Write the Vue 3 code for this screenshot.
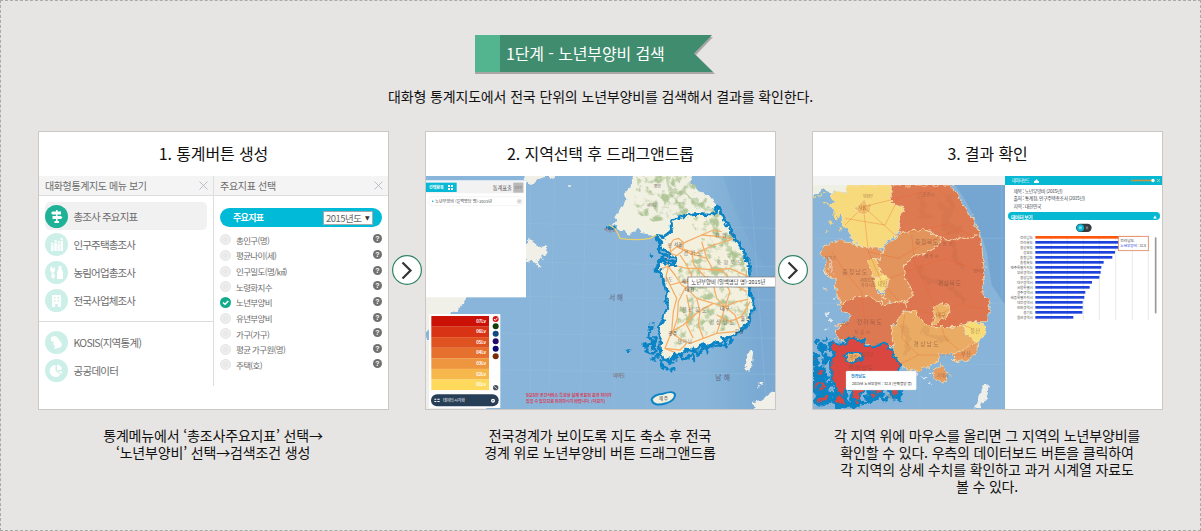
<script setup>
const menu = [
  { label: '총조사 주요지표', icon: 'sign', active: true },
  { label: '인구주택총조사', icon: 'people' },
  { label: '농림어업총조사', icon: 'farm' },
  { label: '전국사업체조사', icon: 'building' },
]
const extra = [
  { label: 'KOSIS(지역통계)', icon: 'korea' },
  { label: '공공데이터', icon: 'pie' },
]
const indicators = ['총인구(명)', '평균나이(세)', '인구밀도(명/㎢)', '노령화지수', '노년부양비', '유년부양비', '가구(가구)', '평균 가구원(명)', '주택(호)']

const levels = [
  { label: '07Lv', color: '#cb1106' }, { label: '06Lv', color: '#d93315' },
  { label: '05Lv', color: '#df5221' }, { label: '04Lv', color: '#e6712f' },
  { label: '03Lv', color: '#ee963f' }, { label: '02Lv', color: '#f6b84c' },
  { label: '01Lv', color: '#fed95c' },
]
const swatches = ['#123f08', '#12487d', '#220a68', '#0a0a70', '#7a2c07']

const southCoast = 'M710 330L730 335L745 325L755 315L750 300L762 285L790 273L830 268L870 270L885 262L892 240L905 270L925 305L945 340L965 370L980 400L990 430L993 455L990 480L987 515L1003 522L1000 550L985 585L975 610L955 622L935 632L915 640L900 655L880 650L860 665L840 660L825 680L800 675L785 690L765 690L750 710L735 705L722 690L718 665L722 635L712 610L725 590L735 560L750 545L735 530L745 500L735 490L728 460L715 440L705 430L720 408L740 415L760 425L765 400L735 375L715 360Z'
const roads = [
  'M770 365L740 390L745 425L765 450L785 480L800 490L830 520L880 535L915 545L945 570L960 612',
  'M770 365L800 350L845 330L900 335L938 343', 'M845 330L880 315L905 320', 'M938 343L880 360L830 385L790 372',
  'M760 345L775 340L790 352L788 378L770 392L752 385L750 360Z', 'M780 390L800 420L815 450L808 480L795 490',
  'M815 380L822 420L850 450L880 480L890 520L915 545', 'M845 350L860 400L880 435L910 440L945 480L980 500',
  'M830 430L880 435L930 430L985 455', 'M745 425L738 455L750 480L770 520L760 560L755 620L735 670L765 682',
  'M795 490L775 530L772 580L757 625', 'M755 620L790 600L835 560L880 535', 'M757 625L785 645L810 655L850 640L890 625L945 620',
  'M735 670L780 675L800 655', 'M800 510L810 560L800 600L820 640', 'M830 520L840 560L835 600L850 640',
  'M915 545L905 580L890 625', 'M915 545L950 530L985 523', 'M915 545L930 500L915 470L860 455',
  'M725 430L760 420L800 430L830 430', 'M750 480L790 470L830 475L880 480', 'M770 365L810 385L860 400', 'M890 570L930 590L965 575L990 530',
]
const islands2 = [
  'M716 420q-18 4-12 16q10 8 22-2M730 405q18-6 30 8M722 370q-14 10-2 14t20 8M728 390q-12 12 6 14',
  'M690 625q-14 10 2 18t-14 20M706 640q-12 12-2 24M675 660q12 4 4 14t14 10M700 670q14 4 6 18M684 680q10 12 24 6M696 700q12 8 20-6',
  'M726 706q-6 20 6 18M744 702q6 22 12 8M760 696q14 10 6-10M785 695q12 12 24-2t12 12',
  'M820 672q10 18 20 10t6-22M856 668q10 6 8 16M880 650q-6 16 12 14t22 6M905 636q14 8 12 24t-14 0M924 632q12 6 4 20',
  'M730 730q8-4 12 2M752 735q6-6 14-2M694 600q6 10-4 14M710 336l12 12M722 352l-4 14',
]

const regions = [
  { d: 'M125 180H262L250 220L270 240L295 245L285 290L280 325L250 345L235 365L180 368L150 355L130 320L110 300L108 270L90 260L75 240L90 230L75 210L100 200L125 205Z', c: '#f7da7b' },
  { d: 'M265 180H440L470 230L500 275L520 310L522 325L500 342L470 335L440 345L410 340L385 325L355 312L320 318L290 325L280 320L285 290L295 245L270 240L250 220Z', c: '#de7a52' },
  { d: 'M60 360L100 345L130 350L150 360L180 368L220 365L235 385L215 402L192 405L203 450L213 480L215 505L240 510L258 520L250 540L225 530L190 515L150 518L105 540L100 520L92 490L90 460L65 450L60 400L45 385Z', c: '#e59560' },
  { d: 'M240 365L280 330L320 318L355 312L410 340L395 365L360 385L330 395L310 410L295 430L300 460L320 490L325 510L302 535L285 530L260 535L228 515L240 505L250 470L230 450L220 430L215 405L235 385Z', c: '#e3935c' },
  { d: 'M410 340L440 345L470 335L500 342L522 325L530 360L536 420L540 450L530 480L535 510L555 525L550 560L545 590L500 590L475 600L440 608L380 608L350 585L330 560L305 555L302 535L325 510L320 490L300 460L295 430L310 410L330 395L360 385L395 365Z', c: '#dd7550' },
  { d: 'M105 540L150 515L190 515L225 530L250 540L285 530L302 535L305 555L280 580L262 600L265 640L275 665L240 657L205 662L180 650L145 640L120 650L95 640L90 620L110 605L90 600L130 590L140 570L115 560Z', c: '#dc7953' },
  { d: 'M305 558L330 560L350 585L380 608H440L475 598L480 625L500 640L518 655L490 680L455 685L430 690L400 685L405 705L370 725L340 740L300 730L288 720L270 700L262 650V610L280 580Z', c: '#eaac65' },
  { d: 'M455 682L485 672L520 645L515 680L490 705L455 710L440 695Z', c: '#e69c60' },
  { d: 'M475 603L500 590L540 600L540 638L515 655L485 630Z', c: '#f8dc78' },
  { d: 'M385 545L410 535L435 540L430 570L405 590L380 605L388 575Z', c: '#ecb468' },
  { d: 'M188 405L212 402L228 440L236 452L210 462L203 450Z', c: '#f0c36c' },
  { d: 'M208 462L240 450L252 470L235 502L212 495Z', c: '#f9df7d' },
  { d: 'M148 248L175 228L195 240L190 262L160 267Z', c: '#efbe68' },
  { d: 'M382 740L410 720L433 745L415 775L390 758Z', c: '#e69c60' },
]
const roads3 = [
  'M175 245L120 300M175 245L270 330L420 300L500 330M175 245L400 190L460 260M175 245L190 380L230 470L300 550L400 570L500 610',
  'M80 380L120 440L170 500L180 600L150 690M320 330L330 420L400 560L420 640L480 690M230 470L330 430L420 400L530 440',
  'M120 680L200 700L280 720L340 690L480 690M300 560L290 640L340 690M400 570L460 540L540 550M120 280L240 300L280 220M190 380L280 400L350 360L440 320',
]
const provinces = ['전라남도', '전라북도', '경상북도', '강원도', '충청남도', '충청북도', '제주특별자치도', '부산광역시', '경상남도', '대구광역시', '서울특별시', '광주광역시', '세종특별자치시', '대전광역시', '인천광역시', '경기도', '울산광역시']
const ends = [1008, 946, 942, 930, 922, 896, 889, 887, 883, 861, 854, 841, 838, 833, 833, 832, 805]
const chart = provinces.map((name, i) => ({ name, w: ends[i] - 691, y: 337 + i * 15, c: i ? '#1e43dd' : '#fb560c' }))
</script>

<template>
  <main class="page" lang="ko">
    <header class="ribbon">
      <svg class="ribbon-bg" width="240" height="40" viewBox="0 0 240 40">
        <path d="M0 2H238L221 20L240 39H0Z" fill="#aaa6a4" />
        <path d="M0 0H237L219 18.5L238 37H0Z" fill="#3f8c6e" />
        <path d="M0 0H25V37H0Z" fill="#53b490" />
      </svg>
      <h1>1단계 - 노년부양비 검색</h1>
    </header>
    <p class="lead">대화형 통계지도에서 전국 단위의 노년부양비를 검색해서 결과를 확인한다.</p>

    <div class="steps">
      <section class="step">
        <div class="card">
          <h2>1. 통계버튼 생성</h2>
          <div class="panels">
            <div class="left">
              <div class="phead"><span>대화형통계지도 메뉴 보기</span>
                <svg width="9" height="9" viewBox="0 0 9 9"><path d="M.5 .5L8.5 8.5M8.5 .5L.5 8.5" stroke="#aab0ba" stroke-width=".8" /></svg>
              </div>
              <template v-for="(group, g) in [menu, extra]" :key="g">
                <ul class="menu" :class="{ second: g === 1 }">
                  <li v-for="m in group" :key="m.label" :class="{ active: m.active }">
                    <svg class="mi" width="23" height="23" viewBox="0 0 23 23">
                      <circle cx="11.5" cy="11.5" r="11.5" :fill="m.active ? '#20b296' : '#ccefe7'" />
                      <g fill="#fff">
                        <path v-if="m.icon === 'sign'" d="M11 5h1.5v1.5H16v3h-3.500v1.500H16l1.500 1.500L16 14h-3.500v2H14v2h-4.500v-2H11v-2H7.500v-3H11V9.500H7.500L6 8l1.500-1.500H11z" />
                        <path v-if="m.icon === 'people'" d="M6 12h2.500v6H6zM9.300 10h2.500v8H9.300zM12.600 11h2.200v7h-2.200zM15.500 8h2.500v10h-2.500zM6.300 9.500h2v2h-2zM9.600 7h2v2.300h-2zM12.700 8.300h2v2h-2zM15.700 5h2v2.300h-2z" />
                        <path v-if="m.icon === 'farm'" d="M6 5l3 3 1-3v5l-2 2 2 2-1 4-3-2 1-4-2-3zM13.500 5h3v3l1.500 3v7h-6v-7l1.500-3z" />
                        <path v-if="m.icon === 'building'" fill-rule="evenodd" d="M7 6h9v12h-3.200v-3h-2.600v3H7zM9 8v1.500h1.500V8zM12.500 8v1.500H14V8zM9 11v1.500h1.500V11zM12.500 11v1.500H14V11z" />
                        <path v-if="m.icon === 'korea'" d="M6 6l4-1 2 1 3 4 2 3-1 3-3 1-4 1 1-3-2-2 1-2-3-1z" />
                        <path v-if="m.icon === 'pie'" d="M10.500 6v6l5 3.500A6 6 0 1 1 10.500 6zM12 5.500a6 6 0 0 1 5 5l-5 1zM12.500 12.500H17.500l-1 2.500z" />
                      </g>
                    </svg>
                    <span>{{ m.label }}</span>
                  </li>
                </ul>
              </template>
            </div>
            <div class="right">
              <div class="phead"><span>주요지표 선택</span>
                <svg width="9" height="9" viewBox="0 0 9 9"><path d="M.5 .5L8.5 8.5M8.5 .5L.5 8.5" stroke="#aab0ba" stroke-width=".8" /></svg>
              </div>
              <div class="pill"><b>주요지표</b><span class="select">2015년도<i>▼</i></span></div>
              <ul class="inds">
                <li v-for="n in indicators" :key="n">
                  <svg width="11" height="11" viewBox="0 0 11 11">
                    <template v-if="n === '노년부양비'">
                      <circle cx="5.500" cy="5.500" r="5.500" fill="#14aa8c" />
                      <path d="M3 5.500L5 7.300L8.300 4" fill="none" stroke="#fff" stroke-width="1.500" />
                    </template>
                    <template v-else>
                      <circle cx="5.500" cy="5.500" r="5" fill="#efefef" stroke="#dedede" stroke-width=".8" />
                      <circle cx="5.500" cy="5.500" r="2.800" fill="#e9e9e9" />
                    </template>
                  </svg>
                  <span>{{ n }}</span><em>?</em>
                </li>
              </ul>
            </div>
          </div>
        </div>
        <p class="cap">통계메뉴에서 ‘총조사주요지표’ 선택→<br>‘노년부양비’ 선택→검색조건 생성</p>
      </section>

      <div class="next"><svg width="30" height="30" viewBox="0 0 30 30"><circle cx="15" cy="15" r="14.400" fill="#fff" stroke="#2f8465" stroke-width="1.200" /><path d="M10.500 7.500L18.500 15.500L10.500 23.500" fill="none" stroke="#333" stroke-width="2.200" /></svg></div>

      <section class="step">
        <div class="card">
          <h2>2. 지역선택 후 드래그앤드롭</h2>
          <svg class="map" width="349" height="233" viewBox="18 153 1047 699">
            <defs>
              <filter id="rough" x="-5%" y="-5%" width="110%" height="110%" color-interpolation-filters="sRGB">
                <feTurbulence type="fractalNoise" baseFrequency=".05" numOctaves="3" seed="4" />
                <feDisplacementMap in="SourceGraphic" scale="22" xChannelSelector="R" yChannelSelector="G" />
              </filter>
              <filter id="forest" x="0" y="0" width="100%" height="100%" color-interpolation-filters="sRGB">
                <feTurbulence type="fractalNoise" baseFrequency=".04" numOctaves="4" seed="12" />
                <feColorMatrix values="0 0 0 0 .7  0 0 0 0 .78  0 0 0 0 .6  5 0 0 0 -2.500" />
                <feComposite in2="SourceGraphic" operator="in" />
              </filter>
              <linearGradient id="sea" x1="0" x2="1"><stop offset=".8" stop-color="#88b5d9" /><stop offset=".95" stop-color="#7aaad3" /></linearGradient>
            </defs>
            <rect x="18" y="153" width="1047" height="699" fill="url(#sea)" />
            <path d="M910 153Q950 290 1020 400L1065 470V153Z" fill="#75a6d0" opacity=".5" />
            <path d="M330 153V852M405 153L385 852M500 153L480 852M595 153L582 852M680 153V852M990 153L1040 852M18 290L1065 310M18 405L1065 425M18 510L1065 525M18 620L1065 640M18 730L1065 748" fill="none" stroke="#a3c8e3" stroke-width="1.500" opacity=".5" />
            <g fill="#f1f0e8" filter="url(#rough)">
              <path d="M310 140H375V155L350 165L335 180L315 165ZM385 140H408V155L398 162ZM318 345L345 350L358 365L385 362L380 390L360 400L352 420L335 405L318 408ZM340 420H368L355 428Z" />
              <path d="M0 500H145L125 540L100 560L95 580L40 600L0 640Z" />
              <path d="M0 600L60 720L220 870H0Z" fill="#efeeeb" />
              <path d="M990 675L1000 680L992 740L976 735L980 700ZM1018 768L1030 775L1022 785ZM1075 795L1030 815L1025 825L995 832L1010 860H1075Z" />
              <circle cx="444" cy="180" r="3" />
            </g>
            <g filter="url(#rough)">
              <path d="M640 140L634 175L622 195L612 210L620 225L605 240L595 262L583 280L592 292L575 296L600 315L620 322L625 332L655 308L668 325L710 332L740 345L770 360L900 300L892 240L870 215L850 205L830 195L815 180L808 140Z" fill="#f0f0e3" />
              <path :d="southCoast" fill="#f3f1de" />
            </g>
            <path d="M650 153H800L880 240L940 340L980 400L985 580L940 610L820 640L760 670L780 540L770 440L850 350L800 275L700 290L640 260Z" filter="url(#forest)" />
            <g fill="none" stroke="#a7bf8c" stroke-width="10" opacity=".55" filter="url(#rough)"><path d="M740 155L750 195L790 205L830 230L865 255M875 290L895 330L930 370L955 420M825 595L850 610M920 370L950 400M790 570L815 585" /></g>
            <g fill="none" stroke="#f5ad66" stroke-width="3.800"><path v-for="d in roads" :key="d" :d="d" stroke-linejoin="round" /></g>
            <g fill="none" stroke="#0b84c6" stroke-width="8" stroke-linejoin="round" stroke-linecap="round" filter="url(#rough)">
              <path :d="southCoast" />
              <path v-for="d in islands2" :key="d" :d="d" stroke-width="9" />
              <path d="M564 307q6-6 10 0t-6 5M693 392h6M624 677h6" />
            </g>
            <path d="M695 824Q700 808 730 806Q760 796 765 808Q766 826 738 835Q700 846 695 824Z" fill="#f2f1df" stroke="#0b84c6" stroke-width="6" />
            <path d="M567 300Q590 310 600 340Q650 348 690 340L710 330" fill="none" stroke="#ead06d" stroke-width="4" />
            <g class="mt" fill="#857a70" font-size="14">
              <text x="701" y="189" textLength="22" font-size="12">평양</text><text x="680" y="245" textLength="34" font-size="12">사리원</text>
              <text x="762" y="364" textLength="26" fill="#555">서울</text><text x="743" y="367">인</text>
              <text x="790" y="390" textLength="56" font-size="16">경기도</text><text x="890" y="418" textLength="75" font-size="15">충청북도</text><text x="885" y="335" textLength="55">강원도</text>
              <text x="730" y="468" textLength="28">남도</text><text x="785" y="473" fill="#555">세종</text><text x="795" y="498" textLength="28" fill="#444">대전</text>
              <text x="785" y="560" textLength="75" font-size="16">전라북도</text><text x="868" y="597" textLength="75" font-size="16">경상남도</text>
              <text x="900" y="555" textLength="28" fill="#444">대구</text><text x="962" y="585" textLength="28" fill="#444">울산</text><text x="945" y="624" textLength="26" fill="#444">부산</text>
              <text x="745" y="630" textLength="26" fill="#444">광주</text><text x="772" y="654" textLength="44">전라남</text><text x="716" y="826" textLength="28" fill="#444">제주</text>
              <g fill="#5f6484"><text x="567" y="524" font-size="20">서</text><text x="590" y="524" font-size="20">해</text><text x="886" y="764" font-size="20">남</text><text x="911" y="764" font-size="20">해</text></g>
              <text x="580" y="756" fill="#7d4a3c" font-size="13" textLength="36">이어도</text><text x="553" y="322" fill="#a65b5b" textLength="35" font-size="12">백령도</text>
            </g>
            <rect x="18" y="166" width="300" height="351" fill="#fff" /><rect x="18" y="168" width="295" height="37" fill="#f2f2f2" />
            <rect x="18" y="173" width="92" height="28" fill="#08b9d5" />
            <path d="M84 180h6v6h-6zM93 180h6v6h-6zM84 189h6v6h-6zM93 189h6v6h-6z" fill="#fff" />
            <rect x="280" y="173" width="30" height="30" fill="#b8b8b8" />
            <rect x="26" y="215" width="284" height="27" rx="12" fill="#fff" stroke="#eee" stroke-width="2" /><circle cx="38" cy="229" r="2.500" fill="#08b9d5" /><circle cx="298" cy="229" r="8" fill="#e5e5e5" /><path d="M295 226l6 6M301 226l-6 6" stroke="#888" />
            <g class="mt">
              <text x="27" y="191" font-size="12" fill="#fff" font-weight="700" textLength="44">선택항목</text><text x="218" y="195" font-size="16" fill="#555" textLength="58">통계표출</text><text x="284" y="192" font-size="11" fill="#777" textLength="22">OFF</text>
              <text x="46" y="233" font-size="12" fill="#444" textLength="170">노년부양비 (일백명당 명)-2015년</text>
              <text x="318" y="817" font-size="12.500" font-weight="700" fill="#d8405a" textLength="257">SGIS의 공간서비스 특성상 실제 공표된 값과 차이가</text>
              <text x="318" y="835" font-size="12.500" font-weight="700" fill="#d8405a" textLength="238">있을 수 있으므로 유의하시기 바랍니다. [더보기]</text>
            </g>
            <rect x="27" y="567" width="214" height="282" fill="#fdfdfd" />
            <g v-for="(l, i) in levels" :key="l.label">
              <rect x="34" :y="573 + i * 31.700" width="173" height="32" :fill="l.color" />
              <text class="mt" x="169" :y="593 + i * 31.700" font-size="13" font-weight="700" fill="#fff" textLength="29">{{ l.label }}</text>
            </g>
            <circle cx="227" cy="582" r="9" fill="#d31713" /><path d="M222 582l4 4 7-8" fill="none" stroke="#fff" stroke-width="3" />
            <circle v-for="(s, i) in swatches" :key="s" cx="227" :cy="604 + i * 22.500" r="9" :fill="s" />
            <circle cx="227" cy="788" r="8" fill="#45505e" /><path d="M222 784l10 8" stroke="#fff" stroke-width="2" />
            <rect x="33" y="808" width="203" height="36" rx="18" fill="#273e57" />
            <path d="M43 821h6v3h-6zM52 821h7v3h-7zM43 828h6v3h-6zM52 828h7v3h-7z" fill="#fff" />
            <text class="mt" x="69" y="831" font-size="12" fill="#fff" textLength="66">데이터 시각화</text>
            <circle cx="219" cy="827" r="6" fill="#fff" /><circle cx="219" cy="827" r="2" fill="#273e57" />
            <rect x="804" y="456" width="265" height="30" fill="#fff" stroke="#767676" stroke-width="2" />
            <text class="mt" x="814" y="477" font-size="16" fill="#333" textLength="222">노년부양비 (일백명당 명)-2015년</text>
          </svg>
        </div>
        <p class="cap">전국경계가 보이도록 지도 축소 후 전국<br>경계 위로 노년부양비 버튼 드래그앤드롭</p>
      </section>

      <div class="next second"><svg width="30" height="30" viewBox="0 0 30 30"><circle cx="15" cy="15" r="14.400" fill="#fff" stroke="#2f8465" stroke-width="1.200" /><path d="M10.500 7.500L18.500 15.500L10.500 23.500" fill="none" stroke="#333" stroke-width="2.200" /></svg></div>

      <section class="step">
        <div class="card">
          <h2>3. 결과 확인</h2>
          <div class="result">
            <svg class="map" width="192" height="233" viewBox="24 153 576 699">
              <defs>
                <filter id="rough3" x="-5%" y="-5%" width="110%" height="110%" color-interpolation-filters="sRGB">
                  <feTurbulence type="fractalNoise" baseFrequency=".06" numOctaves="3" seed="7" />
                  <feDisplacementMap in="SourceGraphic" scale="22" xChannelSelector="R" yChannelSelector="G" />
                </filter>
                <clipPath id="view3"><path d="M24 180H600V852H24Z" /></clipPath>
              </defs>
              <rect x="24" y="153" width="576" height="27" fill="#f3f3f3" />
              <g clip-path="url(#view3)">
                <rect x="24" y="180" width="576" height="672" fill="#87b4d8" />
                <path d="M450 180Q510 260 545 380L560 480L600 540V180Z" fill="#75a6d1" />
                <path d="M24 340H600M24 535H600M24 725L600 718M180 180V852M345 180V852M590 180V852" stroke="#9bc2e0" stroke-width="1.500" opacity=".6" />
                <g filter="url(#rough3)">
                  <path d="M10 160H135V205L100 200L75 205L55 190L24 215H10Z" fill="#eef0e3" />
                  <path d="M24 215Q50 215 70 200" fill="none" stroke="#dcd78b" stroke-width="3" />
                  <path d="M125 165H440V195H125Z" fill="#de7a52" /><path d="M125 165H262V195H125Z" fill="#f7da7b" />
                  <g fill="#f7da7b"><path d="M78 208l30 5l-5 20l-25-5ZM86 262l20 5l-8 14l-18-8ZM58 230l15 5l-5 8ZM72 290l12 5l-8 5ZM60 315l12 2l-6 8ZM100 305l12 5l-5 10Z" /></g>
                  <path v-for="r in regions" :key="r.d" :d="r.d" :fill="r.c" stroke="#f6dfae" stroke-width="2.500" />
                  <path d="M75 395l8 50l-10-15ZM58 435l14 10ZM60 488l10 6l-8 4ZM95 512l-6 10Z" fill="#e59560" stroke="#e6edf0" stroke-width="2" />
                  <path d="M60 565l10-4l-4 12ZM72 590l14-4l-8 8ZM54 610l12 0l-6 6ZM350 755l14 4ZM370 775l10 6ZM375 750l8-8ZM330 745l10 10Z" stroke="#dce7f0" stroke-width="3" fill="#dce7f0" />
                  <path d="M532 782L552 778L546 812L530 840L512 852L524 810Z" fill="#efefe9" />
                </g>
                <path d="M340 200q20 40 10 60t30 10M430 210q20 30 0 60t40 40M400 240q30 10 20 50t40 30M340 420q10 50 50 50t90 60M450 350q-10 60 30 80M290 600q30 40 10 90M350 610q40 40 80 30" fill="none" stroke="#aa5e3c" stroke-width="16" opacity=".13" filter="url(#rough3)" />
                <path v-for="d in roads3" :key="d" :d="d" fill="none" stroke="#e8622a" stroke-width="3" stroke-linejoin="round" opacity=".32" />
                <g filter="url(#rough3)" fill="#d94740" stroke="#0b84c6" stroke-width="7" stroke-linejoin="round">
                  <path d="M24 690l15 5l-5 20l-15-3ZM30 735l25-5l5 20l-25 10ZM45 660l15 5l-8 15ZM26 770l30-5l15 20l-25 20l-24-5ZM60 690l12 15l-15 10ZM30 825l30-25l20 5l-10 25l-35 10ZM90 800l20 5l20 30l-25 15l-15-20ZM140 815l20-5l5 25l-18 12ZM190 800l40-5l-5 20l-25 10ZM250 790l25-5l15 20l-20 15Z" stroke-width="13" />
                  <path d="M85 645L100 660L120 655L130 640L150 638L165 650L175 645L182 662L205 664L240 657L262 675L270 700L288 720L270 745V780L250 798L240 785L225 808L200 800L180 790L160 820L145 825L140 795L125 790L115 820L95 800L85 780L80 760L78 700L85 680L70 670Z" />
                  <path d="M120 690L140 680L167 685L170 700L150 710L125 707Z" fill="#edad68" />
                  <path d="M90 775l-25 8M115 800l10 30M180 815l20 15M230 825l20-10M170 840l30-12M275 810l15 20M60 755l15 4M28 650l12-3M60 640l10 8M26 725l14 3M50 780l-20 14M72 815l14 20M130 840l24-4M285 790l8 6" fill="none" stroke-width="12" />
                </g>
                <g class="mt" fill="#7a4c37" font-size="16" opacity=".55">
                  <text x="174" y="218" textLength="30" font-size="12">의정부</text><text x="160" y="252" font-size="13">서울</text><text x="353" y="212" textLength="36" font-size="13">춘천시</text><text x="396" y="362" textLength="46" font-size="12">단양군</text><text x="358" y="398" textLength="42" font-size="12">영주시</text><text x="330" y="356" font-size="18" textLength="70">충청북도</text>
                  <text x="112" y="446" textLength="75" font-size="18">충 청 남 도</text><text x="398" y="480" textLength="70" font-size="18">경상북도</text><text x="155" y="597" textLength="76" font-size="18">전 라 북 도</text><text x="325" y="662" textLength="76" font-size="18">경 상 남 도</text>
                  <text x="165" y="472" font-size="12">세종특별</text><text x="168" y="486" font-size="12">자치시청</text><text x="218" y="482">대전</text><text x="393" y="575">대구</text><text x="496" y="625">울산</text><text x="468" y="692">부산</text><text x="132" y="701" font-size="14">광주</text><text x="505" y="445" font-size="12">영덕군</text><text x="148" y="628" font-size="12" textLength="46">정읍시</text><text x="170" y="692" font-size="13">담양군</text><text x="395" y="755" font-size="13">거제시</text><text x="60" y="405" font-size="12">태안군</text><text x="110" y="600" font-size="12">군산</text><text x="130" y="735" textLength="75" font-size="18">전라남도</text>
                </g>
                <text class="mt" x="248" y="819" font-size="14" fill="#666">여수</text>
                <rect x="123" y="738" width="211" height="57" rx="4" fill="#fff" stroke="#c8d0d5" />
                <g class="mt"><text x="138" y="760" font-size="12" fill="#2087cc" font-weight="700" textLength="44">전라남도</text><text x="141" y="780" font-size="10.500" fill="#222" textLength="180">2015년 노년부양비 : 32.8 (일백명당 명)</text></g>
              </g>
            </svg>
            <aside>
              <div class="ahead"><span>데이터보드</span><svg width="5" height="4" viewBox="0 0 5 4"><path d="M0 4V2H1L2.500 0L4 2H5V4Z" fill="#fff" /></svg>
                <svg class="slide" width="30" height="5" viewBox="0 0 30 5"><path d="M0 2.500H22" stroke="#c99642" stroke-width="1.600" /><circle cx="22" cy="2.500" r="1.700" fill="#fff" /><path d="M26 1L29 4M29 1L26 4" stroke="#dfe58a" stroke-width=".7" /></svg>
              </div>
              <div class="meta"><span>제목 : 노년부양비 (2015년)</span><span>출처 : 통계청, 인구주택총조사 (2015년)</span><span>지역 : 대한민국</span></div>
              <div class="bar"><b>데이터 보기</b><i>▲</i></div>
              <svg class="chart" width="157" height="97" viewBox="600 294 471 291">
                <rect x="813" y="296" width="47" height="25" rx="12.500" fill="#333b40" /><circle cx="826" cy="308.500" r="11" fill="#08b9d5" /><path d="M822 304h8v8h-8z" fill="#7edbe6" /><path d="M844 304v9M848 304v9M844 308h4" stroke="#999" stroke-width="2" />
                <path d="M739 332V585M787 332V585M835 332V585M883 332V585M932 332V585M982 332V585M1030 332V585" stroke="#dedede" stroke-width="2" />
                <g v-for="p in chart" :key="p.name">
                  <text class="mt" x="684" :y="p.y + 4" text-anchor="end" font-size="10.500" fill="#555">{{ p.name }}</text>
                  <rect x="691" :y="p.y - 4" :width="p.w" height="8" :fill="p.c" />
                </g>
                <rect x="940" y="334" width="90" height="43" fill="#fff" stroke="#e2845b" stroke-width="2.500" />
                <text class="mt" x="946" y="352" font-size="11.500" fill="#444" textLength="42">전라남도</text>
                <text class="mt" x="946" y="367" font-size="11" fill="#3446e0" textLength="50">노년부양비</text><text class="mt" x="998" y="367" font-size="11" fill="#555" textLength="25">: 32.8</text>
                <path d="M1052 337V565" stroke="#999" stroke-width="5" />
              </svg>
            </aside>
          </div>
        </div>
        <p class="cap">각 지역 위에 마우스를 올리면 그 지역의 노년부양비를<br>확인할 수 있다. 우측의 데이터보드 버튼을 클릭하여<br>각 지역의 상세 수치를 확인하고 과거 시계열 자료도<br>볼 수 있다.</p>
      </section>
    </div>
  </main>
</template>

<style>
body { margin: 0; overflow: hidden; }
</style>

<style scoped>
* { box-sizing: border-box; }
.page { width: 1201px; height: 531px; background: #e7e5e4; border: 1px dashed #aaa; padding-top: 34px; font-family: "Noto Sans CJK KR", sans-serif; color: #111; display: flex; flex-direction: column; align-items: center; }
svg { display: block; flex: none; }
.mt { font-family: "Noto Sans CJK KR", sans-serif; }
h1, h2, p, ul { margin: 0; padding: 0; font-weight: 400; list-style: none; }
.ribbon { position: relative; width: 240px; height: 40px; margin-right: 11px; }
.ribbon-bg { position: absolute; left: 0; top: 0; }
h1 { position: relative; font-size: 16px; line-height: 36px; letter-spacing: -.12px; color: #fff; padding-left: 31px; white-space: nowrap; }
.lead { font-size: 14px; line-height: 20px; height: 20px; letter-spacing: -.14px; margin-top: 11px; white-space: nowrap; }
.steps { display: flex; margin-top: 25px; align-self: flex-start; margin-left: 37px; }
.step { width: 351px; }
.card { width: 351px; height: 279px; border: 1px solid #c9c8c7; background: #fff; overflow: hidden; }
h2 { height: 44px; line-height: 43px; text-align: center; font-size: 16px; letter-spacing: -.12px; white-space: nowrap; }
.next { width: 36px; padding: 124px 3px 0; z-index: 1; }
.next.second { padding-left: 2px; }
.cap { margin-top: 16.500px; font-size: 14px; line-height: 17.100px; letter-spacing: -.16px; text-align: center; white-space: nowrap; padding-right: 1px; }
.panels { display: flex; height: 210px; color: #6c6c6c; }
.left { width: 175px; border-right: 1px solid #ddd; }
.right { flex: 1; }
.phead { height: 20px; display: flex; align-items: center; justify-content: space-between; background: #f4f4f4; border-bottom: 1px solid #ddd; padding: 0 5px 0 6px; font-size: 10px; letter-spacing: -.4px; }
.menu { padding: 6px 6px 0; height: 126px; border-bottom: 1px solid #ddd; }
.menu.second { border: 0; padding-top: 6.500px; }
.menu li { height: 28.200px; display: flex; align-items: center; border-radius: 5px; font-size: 10.500px; letter-spacing: -.85px; gap: 5.500px; white-space: nowrap; }
.menu.second li { letter-spacing: -.72px; }
.menu li.active { background: #f1f1f1; }
.right .phead { letter-spacing: -.3px; }
.pill { height: 19px; margin: 12px 6px 0; border-radius: 10px; background: #00bad7; display: flex; align-items: center; justify-content: space-between; padding: 0 9px 0 13px; color: #fff; font-size: 9px; letter-spacing: -.7px; }
.select { height: 14px; width: 50px; background: #fff; border: 1px solid #aaa; color: #666; display: flex; align-items: center; justify-content: space-between; padding: 0 3px 0 2px; font-size: 9.500px; letter-spacing: -.5px; white-space: nowrap; }
.select i { font: 6px "DejaVu Sans", sans-serif; color: #333; }
.inds { padding: 5px 6px 0; }
.inds li { height: 15.650px; display: flex; align-items: center; gap: 5px; font-size: 8.500px; letter-spacing: -.65px; white-space: nowrap; }
.inds em { margin-left: auto; width: 9px; height: 9px; border-radius: 50%; background: #707070; color: #fff; font: 700 7px/9px "Liberation Sans", sans-serif; text-align: center; letter-spacing: 0; position: relative; top: -1px; }
.result { display: flex; height: 233px; }
aside { width: 157px; background: #fff; }
.ahead { height: 9px; background: #07b8d3; color: #fff; font-size: 4.200px; line-height: 9px; display: flex; align-items: center; gap: 5px; padding-left: 7px; letter-spacing: -.4px; }
.slide { margin-left: auto; margin-right: 1px; }
.meta { height: 27px; padding: 1.500px 0 0 8.500px; display: flex; flex-direction: column; color: #3c4450; font-size: 4.800px; line-height: 7.600px; letter-spacing: -.32px; white-space: nowrap; }
.bar { height: 7.500px; margin: .3px 2px 3.200px 3px; border-radius: 4px; background: #07b8d3; color: #fff; display: flex; align-items: center; justify-content: space-between; padding: 0 4px 0 3px; font-size: 4.800px; letter-spacing: -.35px; }
.bar i { font: 4px "DejaVu Sans", sans-serif; }
</style>
